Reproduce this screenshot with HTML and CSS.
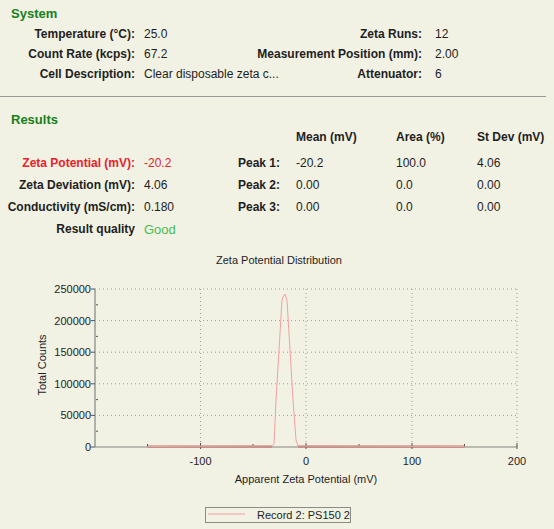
FILE: index.html
```html
<!DOCTYPE html>
<html lang="en">
<head>
    <meta charset="UTF-8">
    <title>Zeta Potential Report</title>
    <link rel="stylesheet" href="styles.css">
</head>
<body>
    <div class="section system">
        <h2>System</h2>
        <div class="sys-grid">
            <div class="lbl">Temperature (°C):</div>
            <div class="val">25.0</div>
            <div class="lbl">Zeta Runs:</div>
            <div class="val val-r">12</div>

            <div class="lbl">Count Rate (kcps):</div>
            <div class="val">67.2</div>
            <div class="lbl">Measurement Position (mm):</div>
            <div class="val val-r">2.00</div>

            <div class="lbl">Cell Description:</div>
            <div class="val">Clear disposable zeta c...</div>
            <div class="lbl">Attenuator:</div>
            <div class="val val-r">6</div>
        </div>
    </div>

    <hr class="divider">

    <div class="section results">
        <h2>Results</h2>
        <div class="res-grid">
            <div></div><div></div><div></div>
            <div class="head pk">Mean (mV)</div>
            <div class="head">Area (%)</div>
            <div class="head">St Dev (mV)</div>

            <div class="lbl red">Zeta Potential (mV):</div>
            <div class="val red">-20.2</div>
            <div class="lbl">Peak 1:</div>
            <div class="val pk">-20.2</div>
            <div class="val">100.0</div>
            <div class="val">4.06</div>

            <div class="lbl">Zeta Deviation (mV):</div>
            <div class="val">4.06</div>
            <div class="lbl">Peak 2:</div>
            <div class="val pk">0.00</div>
            <div class="val">0.0</div>
            <div class="val">0.00</div>

            <div class="lbl">Conductivity (mS/cm):</div>
            <div class="val">0.180</div>
            <div class="lbl">Peak 3:</div>
            <div class="val pk">0.00</div>
            <div class="val">0.0</div>
            <div class="val">0.00</div>

            <div class="lbl">Result quality</div>
            <div class="val good">Good</div>
        </div>
    </div>

    <div class="chart">
        <svg width="554" height="289" viewBox="0 0 554 289">
            <text class="title" x="279" y="24" text-anchor="middle">Zeta Potential Distribution</text>

            <!-- grid -->
            <g class="grid">
                <line x1="95" y1="49" x2="517" y2="49"/>
                <line x1="95" y1="80.6" x2="517" y2="80.6"/>
                <line x1="95" y1="112.2" x2="517" y2="112.2"/>
                <line x1="95" y1="143.8" x2="517" y2="143.8"/>
                <line x1="95" y1="175.4" x2="517" y2="175.4"/>
                <line x1="200.5" y1="49" x2="200.5" y2="207"/>
                <line x1="306" y1="49" x2="306" y2="207"/>
                <line x1="412" y1="49" x2="412" y2="207"/>
                <line x1="517" y1="49" x2="517" y2="207"/>
            </g>

            <!-- axes -->
            <line class="axis-y" x1="95" y1="49" x2="95" y2="207"/>
            <line class="axis-x" x1="95" y1="207" x2="517" y2="207"/>

            <g class="ticks">
                <line x1="91" y1="49" x2="95" y2="49"/>
                <line x1="91" y1="80.6" x2="95" y2="80.6"/>
                <line x1="91" y1="112.2" x2="95" y2="112.2"/>
                <line x1="91" y1="143.8" x2="95" y2="143.8"/>
                <line x1="91" y1="175.4" x2="95" y2="175.4"/>
                <line x1="91" y1="207" x2="95" y2="207"/>
                <line x1="96" y1="64.8" x2="98" y2="64.8"/>
                <line x1="96" y1="96.4" x2="98" y2="96.4"/>
                <line x1="96" y1="128" x2="98" y2="128"/>
                <line x1="96" y1="159.6" x2="98" y2="159.6"/>
                <line x1="96" y1="191.2" x2="98" y2="191.2"/>
                <line x1="147.5" y1="204" x2="147.5" y2="207"/>
                <line x1="200.5" y1="203" x2="200.5" y2="209"/>
                <line x1="253" y1="204" x2="253" y2="207"/>
                <line x1="306" y1="203" x2="306" y2="209"/>
                <line x1="359" y1="204" x2="359" y2="207"/>
                <line x1="412" y1="203" x2="412" y2="209"/>
                <line x1="464.5" y1="204" x2="464.5" y2="207"/>
                <line x1="517" y1="203" x2="517" y2="209"/>
            </g>

            <!-- data: flat baseline plus the single peak -->
            <line class="base" x1="147.5" y1="206.5" x2="272" y2="206.5"/>
            <line class="base" x1="298" y1="206.5" x2="464.5" y2="206.5"/>
            <polyline class="trace" points="147.5,206.5 272,206 274,204 276,160 279,110 282,60 283,57 285,54 287,60 290,110 293,160 296,200 298,206 464.5,206.5"/>

            <g class="lbl-y">
                <text x="91" y="53">250000</text>
                <text x="91" y="84.6">200000</text>
                <text x="91" y="116.2">150000</text>
                <text x="91" y="147.8">100000</text>
                <text x="91" y="179.4">50000</text>
                <text x="91" y="211">0</text>
            </g>
            <g class="lbl-x">
                <text x="200.5" y="225">-100</text>
                <text x="306" y="225">0</text>
                <text x="412" y="225">100</text>
                <text x="517" y="225">200</text>
            </g>
            <text class="axis-title" x="306" y="243" text-anchor="middle">Apparent Zeta Potential (mV)</text>
            <text class="axis-title" x="0" y="0" text-anchor="middle" transform="translate(46 125) rotate(-90)">Total Counts</text>

            <!-- legend -->
            <rect class="legend" x="205.5" y="267.5" width="145" height="15"/>
            <line class="trace" x1="208" y1="274" x2="245" y2="274"/>
            <text class="axis-title" x="257" y="279">Record 2: PS150 2</text>
        </svg>
    </div>
</body>
</html>
```

FILE: styles.css
```css
body {
    margin: 0;
    background-color: #f1f1e4;
    font-family: "Liberation Sans", Arial, sans-serif;
    font-size: 12px;
    color: #1e1e1e;
    width: 554px;
    height: 529px;
    overflow: hidden;
}
h2 {
    margin: 0;
    font-size: 13px;
    font-weight: bold;
    color: #17801a;
    line-height: 16px;
}
.section {
    padding-left: 11px;
}
.system {
    padding-top: 6px;
}
.lbl {
    font-weight: bold;
    text-align: right;
    white-space: nowrap;
}
.val {
    white-space: nowrap;
}
.sys-grid {
    display: grid;
    grid-template-columns: 124px 120px 167px 1fr;
    grid-auto-rows: 20px;
    align-items: center;
    margin-top: 2px;
}
.sys-grid .val {
    padding-left: 9px;
}
.sys-grid .val-r {
    padding-left: 13px;
}
.divider {
    border: none;
    border-top: 1px solid #9a9a94;
    width: 546px;
    margin: 12px 0 0 0;
}
.results {
    padding-top: 15px;
}
.res-grid {
    display: grid;
    grid-template-columns: 124px 80px 65px 116px 81px 1fr;
    grid-template-rows: 20px 27px 22px 22px 22px;
    align-items: end;
    margin-top: -1px;
}
.res-grid > div {
    height: 22px;
    display: flex;
    align-items: center;
}
.res-grid > .lbl {
    justify-content: flex-end;
}
.res-grid > .head {
    height: 20px;
}
.res-grid .val {
    padding-left: 9px;
}
.res-grid .pk {
    padding-left: 16px;
}
.res-grid .val:nth-child(6n+5),
.res-grid .val:nth-child(6n) {
    padding-left: 0;
}
.head {
    font-weight: bold;
    white-space: nowrap;
}
.red {
    color: #e8212b;
}
.good {
    color: #4cbb52;
    font-size: 13px;
}
.chart {
    height: 289px;
}
.chart svg {
    display: block;
    font-family: "Liberation Sans", Arial, sans-serif;
}
.title,
.axis-title {
    font-size: 11px;
    fill: #1e1e1e;
}
.grid line {
    stroke: #9d9d96;
    stroke-width: 1;
    stroke-dasharray: 1 3;
}
.axis-y {
    stroke: #b0b0aa;
    stroke-width: 2;
}
.axis-x {
    stroke: #a8a8a2;
    stroke-width: 1.5;
}
.ticks line {
    stroke: #555;
    stroke-width: 1;
}
.base {
    stroke: #b7776d;
    stroke-width: 2;
}
.trace {
    fill: none;
    stroke: #f2a2a2;
    stroke-width: 1;
}
.lbl-y text {
    font-size: 11px;
    text-anchor: end;
    fill: #1e1e1e;
}
.lbl-x text {
    font-size: 11px;
    text-anchor: middle;
    fill: #1e1e1e;
}
.legend {
    fill: #f1f1e4;
    stroke: #8c8c86;
    stroke-width: 1;
}
```
